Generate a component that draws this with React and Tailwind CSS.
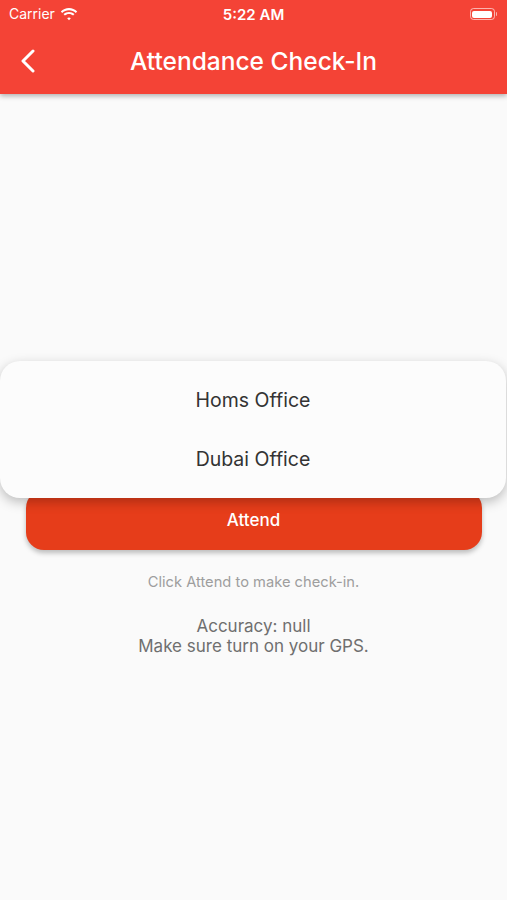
import React from "react";

export default function App() {
  return (
    <div className="relative w-[507px] h-[900px] bg-[#fafafa] overflow-hidden" style={{ fontFamily: "Inter, 'Noto Sans', sans-serif" }}>
      <div className="bg-[#f44336] shadow-[0_2px_5px_rgba(0,0,0,0.3)] relative z-10">
        <div className="h-[28px] flex items-center px-[9px] text-white relative">
          <span className="text-[14px] leading-none">Carrier</span>
          <svg className="ml-[5px]" width="18" height="13" viewBox="0 0 18 13" fill="white">
            <path d="M9 2.2c2.6 0 5 1 6.8 2.7l1.4-1.5C15 1.3 12.1 0 9 0S3 1.3.8 3.4l1.4 1.5C4 3.2 6.4 2.2 9 2.2z" />
            <path d="M9 6c1.6 0 3 .6 4.1 1.6l1.4-1.5C13 4.7 11.1 3.9 9 3.9S5 4.7 3.5 6.1l1.4 1.5C6 6.6 7.4 6 9 6z" />
            <path d="M9 9.6c.7 0 1.3.3 1.8.7L9 12.2 7.2 10.3c.5-.4 1.1-.7 1.8-.7z" />
          </svg>
          <span className="absolute left-0 right-0 text-center text-[15px] font-semibold leading-none">5:22 AM</span>
          <div className="ml-auto mr-[1px] flex items-center">
            <div className="w-[25px] h-[12px] rounded-[3.5px] border border-white/60 p-[1.5px]">
              <div className="w-full h-full bg-white rounded-[2px]" />
            </div>
            <div className="w-[1.5px] h-[4px] bg-white/60 rounded-r ml-[1px]" />
          </div>
        </div>
        <div className="h-[66px] flex items-center relative">
          <svg className="ml-[20px]" width="16" height="24" viewBox="0 0 16 24" fill="none" stroke="white" strokeWidth="3" strokeLinecap="round" strokeLinejoin="round">
            <path d="M13 2L3 12l10 10" />
          </svg>
          <span className="absolute left-0 right-0 text-center text-white text-[24.5px] font-medium leading-none pointer-events-none">Attendance Check-In</span>
        </div>
      </div>

      <div className="flex flex-col items-center pt-[396px]">
        <button className="w-[456px] h-[60px] rounded-[18px] bg-[#e63d1a] text-white text-[17px] font-medium shadow-[0_3px_5px_rgba(0,0,0,0.25)] flex items-center justify-center pt-[2px]">
          Attend
        </button>
        <p className="mt-[23px] text-[14.7px] text-[#9e9e9e] leading-[18px]">Click Attend to make check-in.</p>
        <div className="mt-[25px] text-center text-[17px] text-[#6f6f6f] leading-[20px]">
          <p>Accuracy: null</p>
          <p>Make sure turn on your GPS.</p>
        </div>
      </div>

      <div className="absolute left-0 top-[361px] w-[506px] h-[137px] rounded-[20px] bg-[#fcfcfc] shadow-[0_4px_12px_rgba(0,0,0,0.25)] flex flex-col items-center text-[19.5px] text-[#333333]">
        <div className="h-[59px] mt-[10px] flex items-center">Homs Office</div>
        <div className="h-[59px] flex items-center">Dubai Office</div>
      </div>
    </div>
  );
}
